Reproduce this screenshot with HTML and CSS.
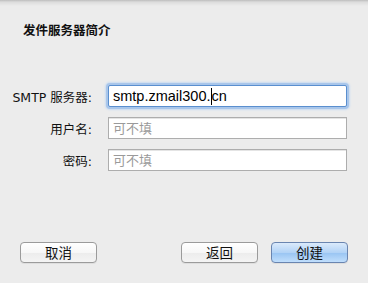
FILE: index.html
```html
<!DOCTYPE html>
<html lang="zh-CN">
<head>
<meta charset="utf-8">
<link rel="stylesheet" href="styles.css">
</head>
<body>
<div class="sheet">
  <h1 class="title">发件服务器简介</h1>
  <div class="form">
    <label class="label">SMTP 服务器:</label>
    <div class="field focus">smtp.zmail300.<span class="caret"></span>cn</div>
    <label class="label">用户名:</label>
    <div class="field placeholder">可不填</div>
    <label class="label">密码:</label>
    <div class="field placeholder">可不填</div>
  </div>
  <div class="buttons">
    <button class="btn">取消</button>
    <div class="spacer"></div>
    <button class="btn">返回</button>
    <button class="btn primary">创建</button>
  </div>
</div>
</body>
</html>
```
FILE: styles.css
```css
html, body {
  margin: 0;
  padding: 0;
  width: 368px;
  height: 283px;
  overflow: hidden;
}
body {
  background: #ececec;
  font-family: "DejaVu Sans", "Noto Sans CJK SC", sans-serif;
  color: #111;
}
.sheet {
  height: 283px;
  box-sizing: border-box;
  padding: 0 20px 0 0;
  background: linear-gradient(to bottom, #bdbdbd 0, #dcdcdc 2px, #ececec 6px, #ececec 100%);
  display: flex;
  flex-direction: column;
}
.title {
  margin: 21px 0 0 23px;
  font-family: "Noto Sans CJK SC", sans-serif;
  font-size: 12.5px;
  font-weight: 700;
  line-height: 18px;
  color: #111;
}
.form {
  margin-top: 46px;
  display: grid;
  grid-template-columns: 96px 1fr;
  column-gap: 12px;
  row-gap: 10px;
  align-items: center;
}
.label {
  text-align: right;
  font-family: "DejaVu Sans", "Noto Sans CJK SC", sans-serif;
  font-size: 12.5px;
  color: #111;
  white-space: nowrap;
  padding-right: 4px;
}
.field {
  height: 22px;
  box-sizing: border-box;
  border: 1px solid #adadad;
  background: #fff;
  font-size: 13px;
  line-height: 20px;
  padding-left: 4px;
  width: 239px;
  box-shadow: inset 0 1px 0 #e4e4e4;
}
.field.focus {
  font-family: "Liberation Sans", "DejaVu Sans", sans-serif;
  font-size: 14.5px;
  color: #000;
  border: 1px solid #5a8fcf;
  border-radius: 2px;
  box-shadow: 0 0 0 2px #a9c6ea, 0 0 2px 3px #c9dcf2;
}
.caret {
  display: inline-block;
  width: 1px;
  height: 17px;
  background: #000;
  vertical-align: -4px;
}
.placeholder {
  color: #9a9a9a;
  font-family: "Noto Sans CJK SC", sans-serif;
}
.buttons {
  margin-top: auto;
  margin-bottom: 20px;
  padding-left: 20px;
  display: flex;
  align-items: center;
}
.spacer { flex: 1; }
.btn {
  width: 77px;
  height: 21px;
  margin: 0;
  padding: 0;
  border: 1px solid #9b9b9b;
  border-radius: 4px;
  background: linear-gradient(to bottom, #ffffff 0%, #f7f7f7 50%, #ececec 51%, #f4f4f4 100%);
  box-shadow: 0 1px 0 rgba(0,0,0,0.06);
  font-family: "Noto Sans CJK SC", sans-serif;
  font-size: 13.5px;
  line-height: 19px;
  color: #111;
}
.btn + .btn { margin-left: 13px; }
.btn.primary {
  border-color: #6a85b0;
  background: linear-gradient(to bottom, #dbeafb 0%, #b2d3f6 50%, #98c4f2 51%, #c0defc 100%);
}
```
